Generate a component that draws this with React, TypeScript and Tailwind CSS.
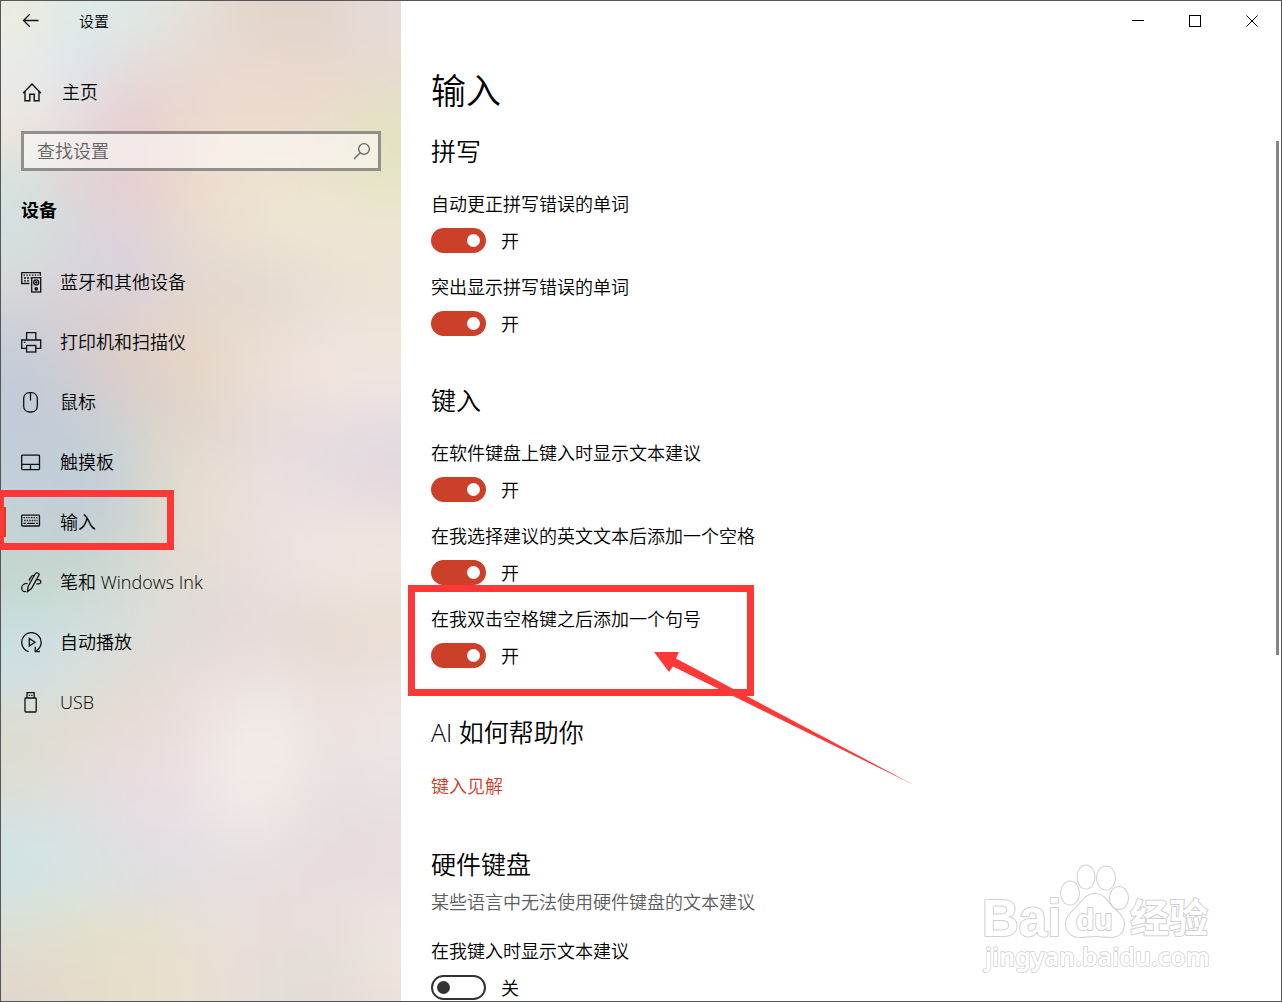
import React, { useId, useState } from "react";

const TINTS = [
  "#ecece0 #dce9e8 #dfeae6 #e2e3dc #e6dad0 #e2d4ca #e2d5cb #e6dbd8",
  "#e8ebec #dde5f0 #e5d8da #e8d8d2 #ead9d0 #ead9cf #ead9cf #e8dacf",
  "#f0e6dc #e8dcdc #e6cdd0 #ead6cc #eddccf #ecdccf #e9dccb #e2e3c0",
  "#d8e2dc #e2d4d4 #e5ccd0 #ebd7cc #eee0cf #ede2ce #eae3ca #e4e4c4",
  "#cfe1e2 #d8d8dc #dfd2d8 #e8d8d0 #ece1d2 #f0e7d5 #efe7d6 #eee6d4",
  "#dcdad8 #d8d4dc #d6d2e0 #e0d6d4 #e3d8ce #e4d9d0 #eae1d4 #ebe3d4",
  "#ccd0d8 #d8cdd0 #e0d0cb #e6d5c8 #e6d9cd #e8ddd4 #ece2da #eee4da",
  "#c2ccd8 #d0ccd2 #dccdc8 #e3d2c5 #e9dacd #f0e2d8 #f2e5dc #f2e7df",
  "#c0ccd8 #c4cdd6 #cfd2d3 #dfd5cb #e3d8d0 #e6dbdc #e6dde0 #e5dce2",
  "#c2ced8 #c2cdd6 #c8d2d5 #e4dccc #e9dfd6 #e9dfdf #e6dde1 #e1d7de",
  "#c4d4d8 #c0cdd6 #ccd4d3 #e4dccb #e9dfd7 #ece1e0 #eee4e0 #eee3de",
  "#c4d6c8 #c8d6cc #d4dcd4 #e2dcd4 #e5dcd8 #eae0de #efe5e1 #f0e6e0",
  "#c9dee2 #cfdfe0 #d8dedc #dfdbd8 #e3d9d8 #e5dad6 #e6dbcf #e8dcd0",
  "#cfe0e4 #d8dedc #e0dcd4 #e6dcd6 #eae0de #ebe3df #e9ddd8 #ebe1dd",
  "#dedccf #e2dcd0 #e8dcd4 #ebdddb #f0e8e6 #f3eeea #ebe2e0 #eee6e4",
  "#dedcd2 #e4dedb #e8dce0 #ebdfe3 #f2ebe8 #f3eeea #e9dfde #ebe4e3",
  "#d4e2e2 #dbe1e3 #e4dee2 #e6dee4 #ece6e6 #ece5e2 #e6dddd #e7dddf",
  "#cfe4e6 #d5e3e4 #dde0e4 #e0dde3 #e5dee1 #e6dedd #e5dbdc #e8dddf",
  "#dde0d4 #e2e0cb #e4e0cc #e7e1d2 #e9dfd8 #e8dedb #e9e0dd #eee5e1",
  "#e0d8cc #e4dbcc #e5dfc8 #e8e0cf #e8dfd6 #e5ddd8 #e2dad3 #ebe3db",
].map((row) => row.split(" "));

const clamp = (n: number, max: number) => Math.min(Math.max(n, 0), max);

/* Acrylic backdrop: a coarse colour grid, heavily blurred. The grid runs past every edge. */
function Acrylic() {
  const cells: React.ReactElement[] = [];
  for (let r = -2; r < TINTS.length + 2; r++) {
    for (let c = -2; c < 10; c++) {
      cells.push(
        <rect
          key={`${r}:${c}`}
          x={c * 50}
          y={r * 50}
          width="51"
          height="51"
          fill={TINTS[clamp(r, TINTS.length - 1)][clamp(c, 7)]}
        />,
      );
    }
  }
  return (
    <svg
      aria-hidden="true"
      className="absolute inset-0 h-full w-full"
      viewBox="0 0 400 1000"
      preserveAspectRatio="none"
    >
      <filter id="acrylic" x="-100" y="-100" width="600" height="1200" filterUnits="userSpaceOnUse" colorInterpolationFilters="sRGB">
        <feGaussianBlur stdDeviation="27" />
      </filter>
      <g filter="url(#acrylic)">{cells}</g>
    </svg>
  );
}

function Icon({ children, width = 1.3 }: { children: React.ReactNode; width?: number }) {
  return (
    <svg
      aria-hidden="true"
      className="h-[21px] w-[21px] shrink-0"
      viewBox="0 0 21 21"
      fill="none"
      stroke="#111"
      strokeWidth={width}
    >
      {children}
    </svg>
  );
}

const DevicesIcon = () => (
  <Icon>
    <path d="M8.5 11.5H.7V.7h18.6v3" />
    <path d="M2.5 3.2h15" strokeDasharray="1.5 1.3" />
    <path d="M3 6h6.5M3 8.800h5.5" strokeDasharray="2 1" />
    <rect x="10.7" y="5.7" width="9" height="14.3" />
    <circle cx="15.2" cy="10.4" r="2.5" />
    <circle cx="15.2" cy="10.4" r=".6" fill="#111" />
    <circle cx="15.2" cy="16.8" r="1.2" fill="#333" />
  </Icon>
);
const PrinterIcon = () => (
  <Icon>
    <path d="M5.6 8V.7h9.2V8" />
    <path d="M5.6 16.3H.7V8h19v8.300h-4.900" />
    <rect x="5.6" y="13.5" width="9.2" height="6.5" />
    <path d="M2.800 10.400h1.600" />
  </Icon>
);
const MouseIcon = () => (
  <Icon>
    <rect x="2.7" y=".7" width="13.6" height="19.3" rx="5.6" />
    <path d="M9.5 1v7.5" />
  </Icon>
);
const TouchpadIcon = () => (
  <Icon>
    <rect x=".7" y="3.2" width="17.8" height="14.4" rx=".8" />
    <path d="M.7 12.4h17.800M9.500 12.400v5" />
  </Icon>
);
const KeyboardIcon = () => (
  <Icon>
    <rect x=".7" y="3.2" width="17.8" height="10.8" rx=".8" />
    <path d="M2.500 5.700h14.500M3.200 8.500h13.500" strokeDasharray="1.4 1.1" />
    <path d="M2.500 11.400h2.300M6 11.400h8M15 11.400h2" />
  </Icon>
);
const PenIcon = () => (
  <Icon>
    <path d="M17.200 1.200c1 .7 1 1.800.2 3L10.500 16.500l-4 3 .6-5L13.800 2.500c.9-1.600 2.200-2.100 3.400-1.300z" />
    <path d="M13 3.500c-1.500-.6-2.600.6-3.600 2.400l-1.500 2.700" />
    <path d="M6.500 11.300C3.200 11.300.7 13.300.7 16c0 2.600 1.800 4 4.300 3.400M15.800 7.800c2.300-.4 4.100.4 4.100 1.900 0 1.600-1.700 2.400-4.600 2.200" />
  </Icon>
);
const AutoplayIcon = () => (
  <Icon>
    <path d="M7.600 19.600A9.700 9.700 0 1 1 15 18.900" />
    <path d="M14.200 14.800v4.700h4.700" />
    <path d="M8.300 6.500v7.600l5.700-3.800z" />
  </Icon>
);
const UsbIcon = () => (
  <Icon>
    <path d="M6 6V.7h7.200V6" />
    <rect x="4" y="6" width="11.200" height="14" rx=".8" />
    <path d="M7.800 3.300h1.400M10.200 3.300h1.400" />
  </Icon>
);

const NAV: { label: string; icon: () => React.ReactElement; current?: boolean }[] = [
  { label: "蓝牙和其他设备", icon: DevicesIcon },
  { label: "打印机和扫描仪", icon: PrinterIcon },
  { label: "鼠标", icon: MouseIcon },
  { label: "触摸板", icon: TouchpadIcon },
  { label: "输入", icon: KeyboardIcon, current: true },
  { label: "笔和 Windows Ink", icon: PenIcon },
  { label: "自动播放", icon: AutoplayIcon },
  { label: "USB", icon: UsbIcon },
];

function Sidebar() {
  return (
    <aside className="relative w-[400px] shrink-0">
      <Acrylic />
      <div className="relative">
        <header className="flex h-10 items-center pl-5">
          <button type="button" aria-label="返回" className="flex h-10 w-[58px] items-center">
            <Icon>
              <path d="M17.500 9.500h-15M8.800 3.200L2.500 9.500l6.300 6.300" />
            </Icon>
          </button>
          <span className="text-[15px] leading-6">设置</span>
        </header>

        <a href="#home" className="mt-[31px] flex h-10 items-center gap-5 pl-5">
          <Icon width={1.4}>
            <path d="M2 11.300L11 2l9 9.300M4 9.500v9.300h4.800v-6.500h4.400v6.500H18V9.500" />
          </Icon>
          <span className="leading-6">主页</span>
        </a>

        <label className="mx-5 mt-[19px] flex h-10 items-center border-[3px] border-black/40 bg-white/50 pr-[6px] pl-[13px]">
          <input
            type="search"
            aria-label="查找设置"
            placeholder="查找设置"
            className="min-w-0 flex-1 bg-transparent leading-6 outline-none placeholder:text-[#66625f]"
          />
          <svg aria-hidden="true" className="h-5 w-5" viewBox="0 0 20 20" fill="none" stroke="#666" strokeWidth="1.3">
            <circle cx="12" cy="8" r="5.3" />
            <path d="M8.200 11.800L2 18" />
          </svg>
        </label>

        <h2 className="mt-[27px] px-5 leading-6 font-bold">设备</h2>

        <nav className="mt-[30px]">
          {NAV.map(({ label, icon: Glyph, current }) => (
            <a
              key={label}
              href={`#${label}`}
              aria-current={current ? "page" : undefined}
              className="relative flex h-[60px] items-center gap-[18px] pl-5"
            >
              {current && (
                <>
                  <span className="absolute left-0 h-[30px] w-[5px] bg-[#d13f2b]" />
                  <span className="absolute -top-[2px] -left-px h-[60px] w-[174px] border-[7px] border-l-4 border-[#fd3837]" />
                </>
              )}
              <Glyph />
              <span className="leading-6">{label}</span>
            </a>
          ))}
        </nav>
      </div>
    </aside>
  );
}

function Setting({
  label,
  initial = true,
  children,
}: {
  label: string;
  initial?: boolean;
  children?: React.ReactNode;
}) {
  const id = useId();
  const [on, setOn] = useState(initial);
  return (
    <div className="relative">
      <label htmlFor={id} className="block leading-6">
        {label}
      </label>
      <div className="mt-3 flex h-[25px] items-center gap-[15px]">
        <input
          id={id}
          type="checkbox"
          role="switch"
          checked={on}
          onChange={(e) => setOn(e.target.checked)}
          className="flex h-[25px] w-[55px] appearance-none items-center rounded-full border-[2px] border-[#333] px-1 before:h-[13px] before:w-[13px] before:rounded-full before:bg-[#333] checked:justify-end checked:border-[#cc4029] checked:bg-[#cc4029] checked:before:bg-white"
        />
        <span className="leading-6">{on ? "开" : "关"}</span>
      </div>
      {children}
    </div>
  );
}

function Section({ title, children }: { title: string; children: React.ReactNode }) {
  return (
    <section>
      <h2 className="text-[25px] leading-9">{title}</h2>
      {children}
    </section>
  );
}

function Callout() {
  return (
    <>
      <span className="pointer-events-none absolute -top-[22px] -left-[23px] h-[111px] w-[346px] border-[7px] border-[#fd3837]" />
      <svg
        aria-hidden="true"
        className="pointer-events-none absolute top-[45px] left-[223px] h-[134px] w-[261px]"
        viewBox="0 0 261 134"
      >
        <path fill="#fd3837" d="M0 0H25L22 6.500L260 133L19 14.500L15 20z" />
      </svg>
    </>
  );
}

function Watermark() {
  return (
    <svg
      aria-hidden="true"
      className="pointer-events-none absolute right-[50px] bottom-[20px] h-[120px] w-[250px] font-['Liberation_Sans','Noto_Sans_CJK_SC',sans-serif]"
      viewBox="0 0 250 120"
      fill="#fff"
      stroke="#d0d0d0"
      strokeWidth="2"
      strokeLinejoin="round"
      style={{ paintOrder: "stroke" }}
    >
      <text x="1" y="75" fontSize="51" fontWeight="700">
        Bai
      </text>
      <ellipse cx="89" cy="32" rx="9" ry="11.5" />
      <ellipse cx="105" cy="16" rx="8.5" ry="11.5" />
      <ellipse cx="125" cy="17" rx="9" ry="11.5" />
      <ellipse cx="138" cy="37" rx="9" ry="11" />
      <path d="M114 33c-9 0-13 7-18 13-5 5-11 9-11 17 0 10 8 13 14 13 6 0 9-1 15-1s10 1 16 1c7 0 13-4 13-13 0-8-7-12-12-17-5-6-8-13-17-13z" />
      <text x="95" y="69" fontSize="30" fontWeight="700">
        du
      </text>
      <text x="149" y="71" fontSize="39" fontWeight="700">
        经验
      </text>
      <text x="4" y="105" fontSize="25" fontWeight="600" className="font-['Noto_Sans',sans-serif]" strokeWidth="1.5">
        jingyan.baidu.com
      </text>
    </svg>
  );
}

function WindowButton({ label, children }: { label: string; children: React.ReactNode }) {
  return (
    <button type="button" aria-label={label} className="flex h-10 w-[57px] items-center justify-center">
      <svg
        aria-hidden="true"
        className="h-[13px] w-[13px]"
        viewBox="0 0 13 13"
        fill="none"
        stroke="#000"
      >
        {children}
      </svg>
    </button>
  );
}

export default function App() {
  return (
    <div className="relative flex min-h-screen border border-[#55565a] bg-white font-['Open_Sans','Noto_Sans_CJK_SC',sans-serif] text-[18px] font-[350] text-black">
      <Sidebar />
      <main className="relative min-w-0 flex-1">
        <div className="flex justify-end">
          <WindowButton label="最小化">
            <path d="M0 5.500h12" />
          </WindowButton>
          <WindowButton label="最大化">
            <rect x=".5" y=".5" width="11" height="11" />
          </WindowButton>
          <WindowButton label="关闭">
            <path d="M.5 .5l11 11M11.500 .5L.5 11.500" />
          </WindowButton>
        </div>

        <div className="px-[30px] pt-[25px]">
          <h1 className="text-[35px] leading-[50px]">输入</h1>
          <div className="mt-[17px] flex flex-col gap-[46px]">
            <Section title="拼写">
              <div className="mt-[23px] flex flex-col gap-[22px]">
                <Setting label="自动更正拼写错误的单词" />
                <Setting label="突出显示拼写错误的单词" />
              </div>
            </Section>
            <Section title="键入">
              <div className="mt-[23px] flex flex-col gap-[22px]">
                <Setting label="在软件键盘上键入时显示文本建议" />
                <Setting label="在我选择建议的英文文本后添加一个空格" />
                <Setting label="在我双击空格键之后添加一个句号">
                  <Callout />
                </Setting>
              </div>
            </Section>
            <Section title="AI 如何帮助你">
              <a href="#insights" className="mt-[23px] block w-fit leading-[27px] text-[#cc4029]">
                键入见解
              </a>
            </Section>
            <Section title="硬件键盘">
              <p className="mt-2 mb-[25px] leading-6 text-[#5e5e5e]">某些语言中无法使用硬件键盘的文本建议</p>
              <Setting label="在我键入时显示文本建议" initial={false} />
            </Section>
          </div>
        </div>

        <span className="absolute top-[140px] right-[2px] h-[514px] w-[3px] bg-[#858585]" />
        <Watermark />
      </main>
    </div>
  );
}
